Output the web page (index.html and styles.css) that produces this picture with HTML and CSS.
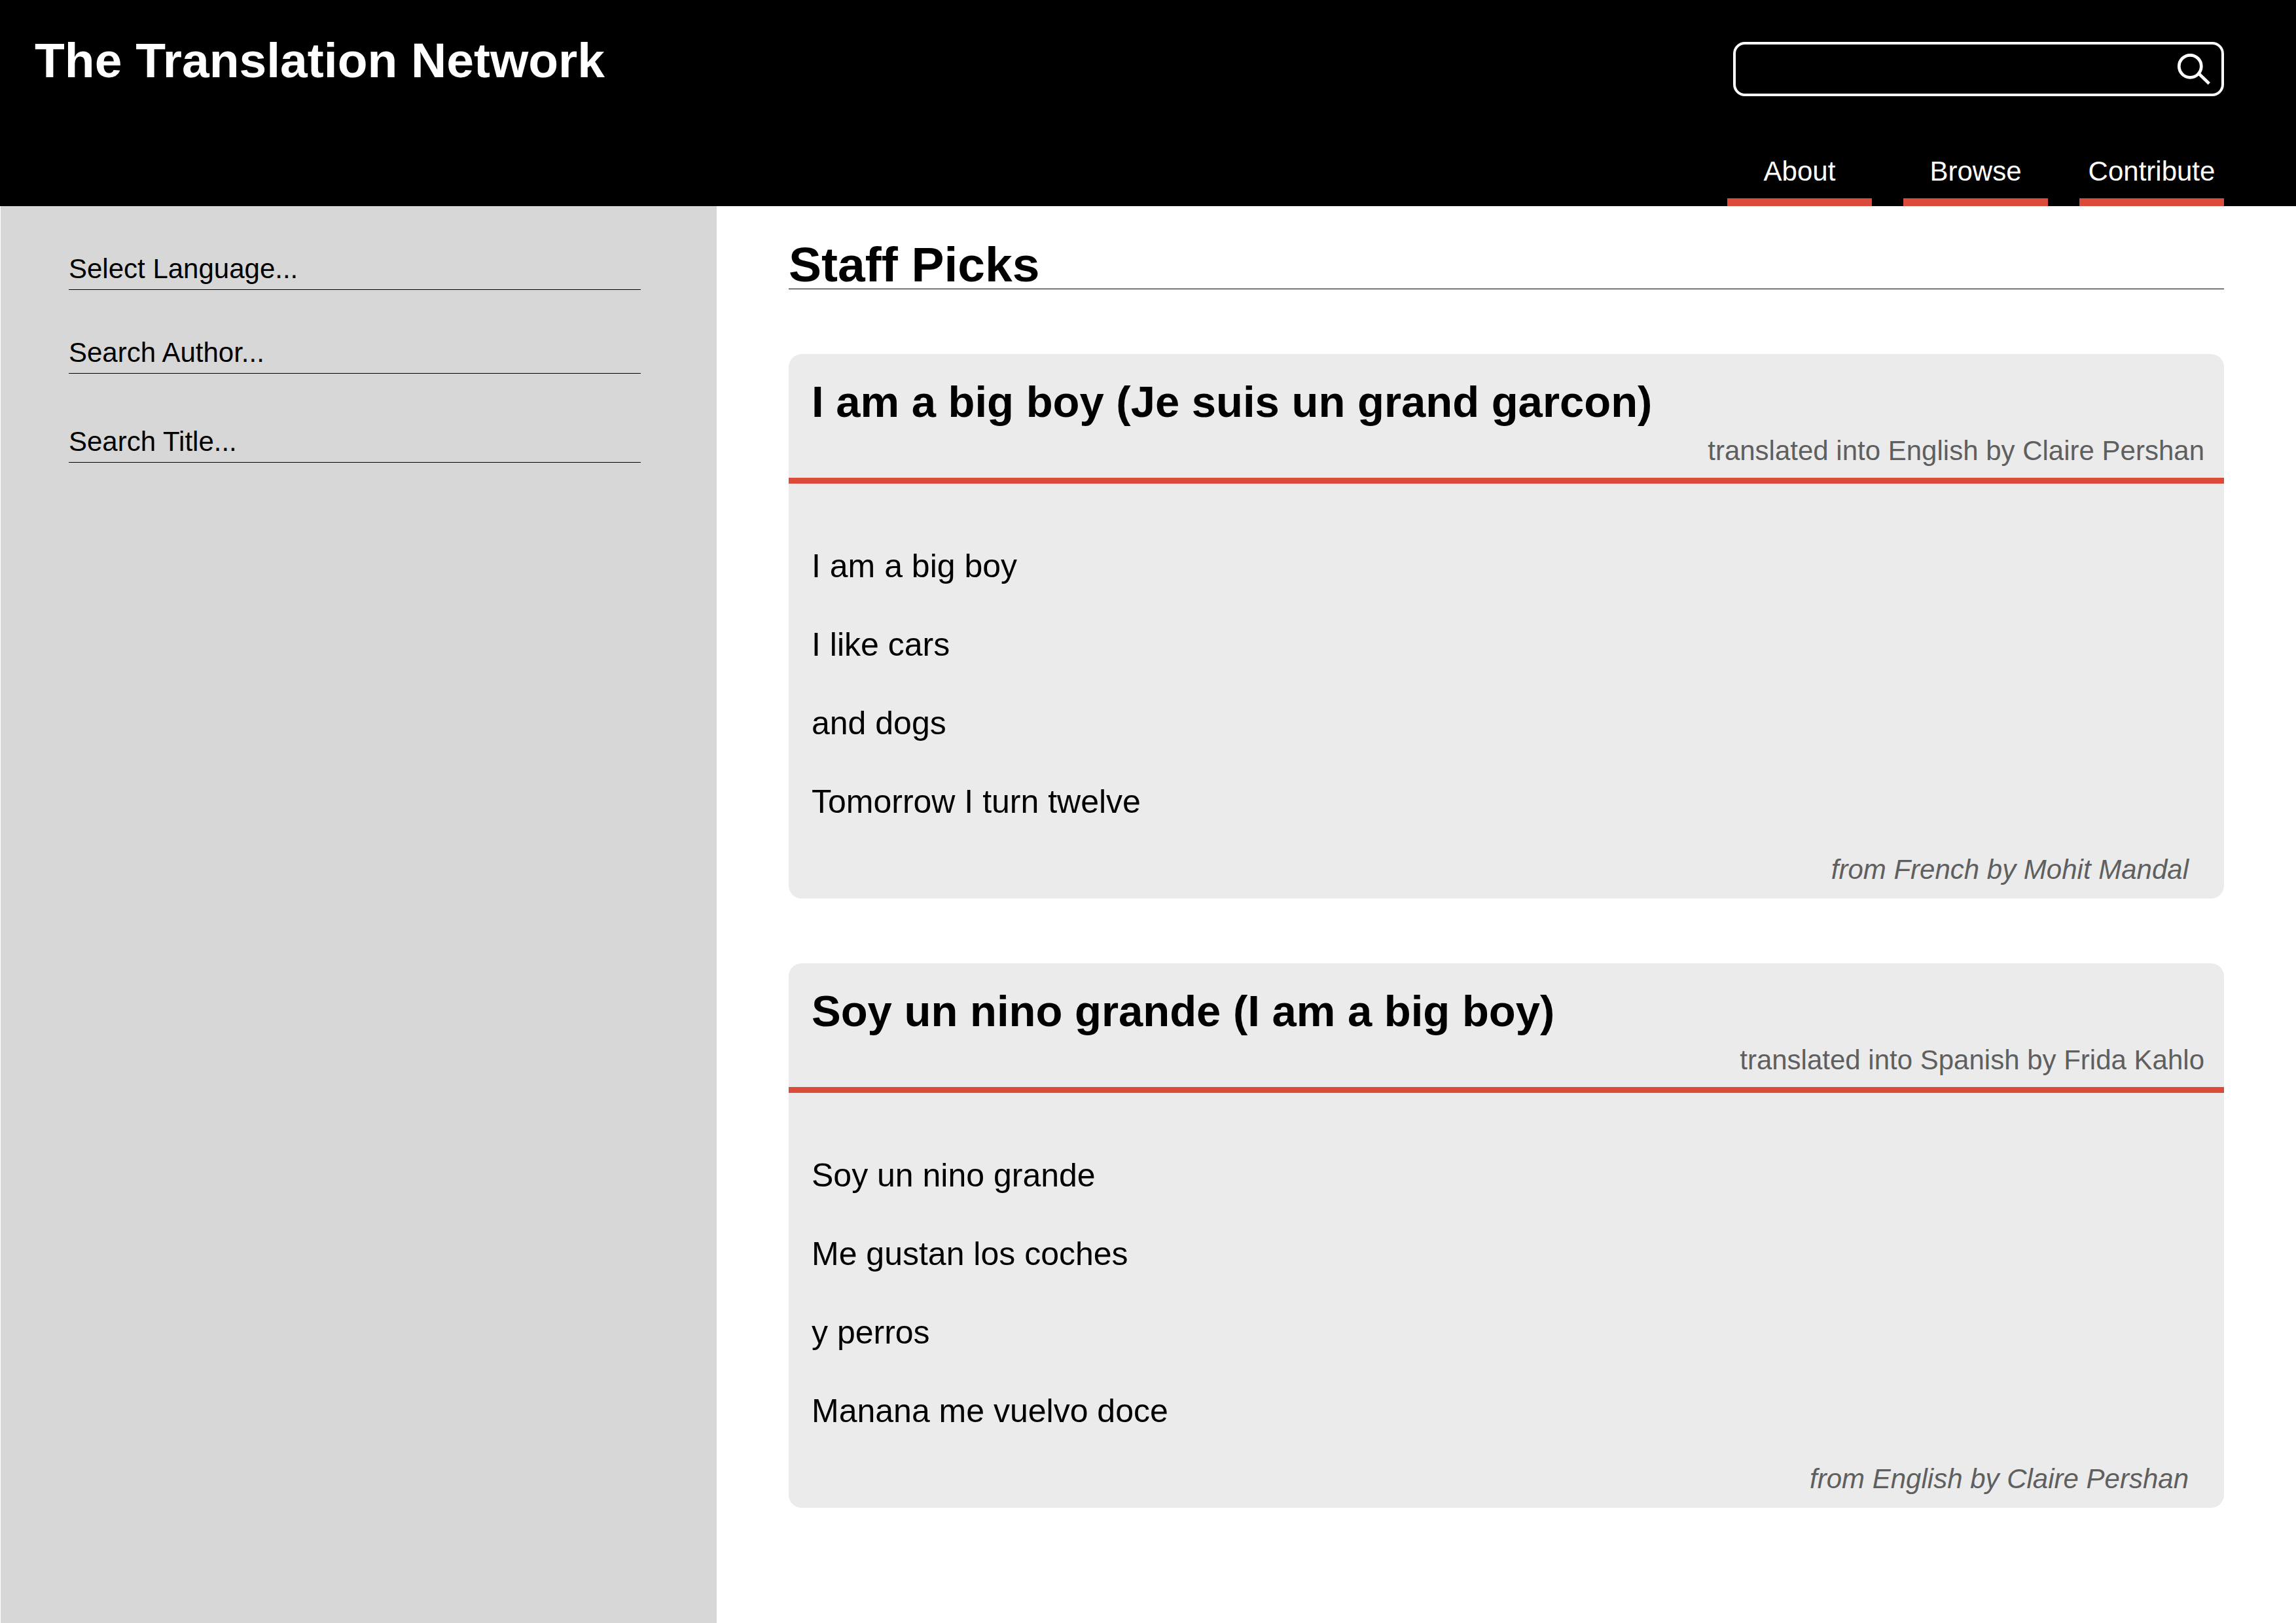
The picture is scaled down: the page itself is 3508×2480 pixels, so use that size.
FILE: index.html
```html
<!DOCTYPE html>
<html lang="en">
<head>
  <meta charset="utf-8">
  <meta name="viewport" content="width=device-width, initial-scale=1">
  <title>The Translation Network</title>
  <link rel="stylesheet" href="styles.css">
</head>
<body class="page">
  <header class="masthead">
    <h1 class="masthead__title">The Translation Network</h1>
    <div class="masthead__tools">
      <form class="search" role="search">
        <input class="search__input" type="search" aria-label="Search">
        <button class="search__button" type="submit" aria-label="Search">
          <svg class="search__icon" viewBox="0 0 52 52" aria-hidden="true">
            <circle cx="21.3" cy="21.3" r="17"/>
            <path d="M33.5 31.5 L50.3 47.7"/>
          </svg>
        </button>
      </form>
      <nav class="tabs">
        <a class="tabs__link" href="#about">About</a>
        <a class="tabs__link" href="#browse">Browse</a>
        <a class="tabs__link" href="#contribute">Contribute</a>
      </nav>
    </div>
  </header>

  <div class="layout">
    <aside class="sidebar">
      <form class="filters">
        <select class="field" aria-label="Select language">
          <option>Select Language...</option>
        </select>
        <input class="field" type="text" aria-label="Search author" placeholder="Search Author...">
        <input class="field field--title" type="text" aria-label="Search title" placeholder="Search Title...">
      </form>
    </aside>

    <main class="content">
      <h2 class="content__heading">Staff Picks</h2>

      <article class="card">
        <header class="card__header">
          <h3 class="card__title">I am a big boy (Je suis un grand garcon)</h3>
          <p class="card__translator">translated into English by Claire Pershan</p>
        </header>
        <div class="card__poem">
          <p class="card__line">I am a big boy</p>
          <p class="card__line">I like cars</p>
          <p class="card__line">and dogs</p>
          <p class="card__line">Tomorrow I turn twelve</p>
        </div>
        <footer class="card__source">from French by Mohit Mandal</footer>
      </article>

      <article class="card">
        <header class="card__header">
          <h3 class="card__title">Soy un nino grande (I am a big boy)</h3>
          <p class="card__translator">translated into Spanish by Frida Kahlo</p>
        </header>
        <div class="card__poem">
          <p class="card__line">Soy un nino grande</p>
          <p class="card__line">Me gustan los coches</p>
          <p class="card__line">y perros</p>
          <p class="card__line">Manana me vuelvo doce</p>
        </div>
        <footer class="card__source">from English by Claire Pershan</footer>
      </article>
    </main>
  </div>
</body>
</html>
```

FILE: styles.css
```css
:root {
  --accent: #db4b39;
  --panel: #d7d7d7;
  --card: #ebebeb;
  --muted: #5f5f5f;
}

* {
  box-sizing: border-box;
  margin: 0;
}

.page {
  display: flex;
  flex-direction: column;
  min-height: 100vh;
  background: #fff;
  color: #000;
  font: 42px/49px "Liberation Sans", Arial, Helvetica, sans-serif;
}

/* Masthead */

.masthead {
  display: flex;
  justify-content: space-between;
  padding: 0 110px 0 53px;
  background: #000;
  color: #fff;
}

.masthead__title {
  padding-top: 49px;
  font-size: 75px;
  line-height: 86px;
}

.masthead__tools {
  display: flex;
  flex-direction: column;
  align-items: flex-end;
  gap: 90px;
  padding-top: 64px;
}

.search {
  display: flex;
  align-items: center;
  width: 750px;
  height: 83px;
  padding-right: 17px;
  border: 4px solid #fff;
  border-radius: 18px;
}

.search__input {
  flex: 1;
  min-width: 0;
  padding: 0 20px;
  border: 0;
  outline: 0;
  background: transparent;
  color: inherit;
  font: inherit;
}

.search__button {
  display: flex;
  padding: 0;
  border: 0;
  background: transparent;
  color: inherit;
  cursor: pointer;
}

.search__icon {
  width: 52px;
  height: 52px;
  fill: none;
  stroke: currentColor;
  stroke-width: 4.7;
}

.tabs {
  display: flex;
  gap: 48px;
}

.tabs__link {
  width: 221px;
  padding-bottom: 17px;
  border-bottom: 12px solid var(--accent);
  color: inherit;
  text-align: center;
  text-decoration: none;
}

/* Two-column layout */

.layout {
  display: grid;
  flex: 1;
  grid-template-columns: 1095px 1fr;
}

.sidebar {
  padding: 71px 116px 71px 104px;
  border-left: 1px solid #fff;
  background: var(--panel);
}

.filters {
  display: flex;
  flex-direction: column;
  gap: 71px;
}

.field {
  width: 100%;
  height: 57px;
  padding: 0 0 7px;
  border: 0;
  border-bottom: 1px solid #000;
  border-radius: 0;
  outline: 0;
  appearance: none;
  background: transparent;
  color: inherit;
  font: inherit;
}

.field--title {
  margin-top: 8px;
}

.field::placeholder {
  color: inherit;
  opacity: 1;
}

/* Staff picks */

.content {
  padding: 52px 110px 99px;
}

.content__heading {
  border-bottom: 1px solid #000;
  font-size: 75px;
  line-height: 74px;
}

.card {
  margin-top: 99px;
  border-radius: 20px;
  background: var(--card);
}

.card__header {
  padding: 35px 30px 17px 35px;
  border-bottom: 9px solid var(--accent);
}

.card__title {
  font-size: 67px;
  line-height: 76px;
}

.card__translator {
  margin-top: 12px;
  color: var(--muted);
  text-align: right;
}

.card__poem {
  padding: 66px 35px 0;
  font-size: 50px;
  line-height: 120px;
}

.card__source {
  padding: 19px 54px 20px 35px;
  color: var(--muted);
  font-style: italic;
  text-align: right;
}
```
